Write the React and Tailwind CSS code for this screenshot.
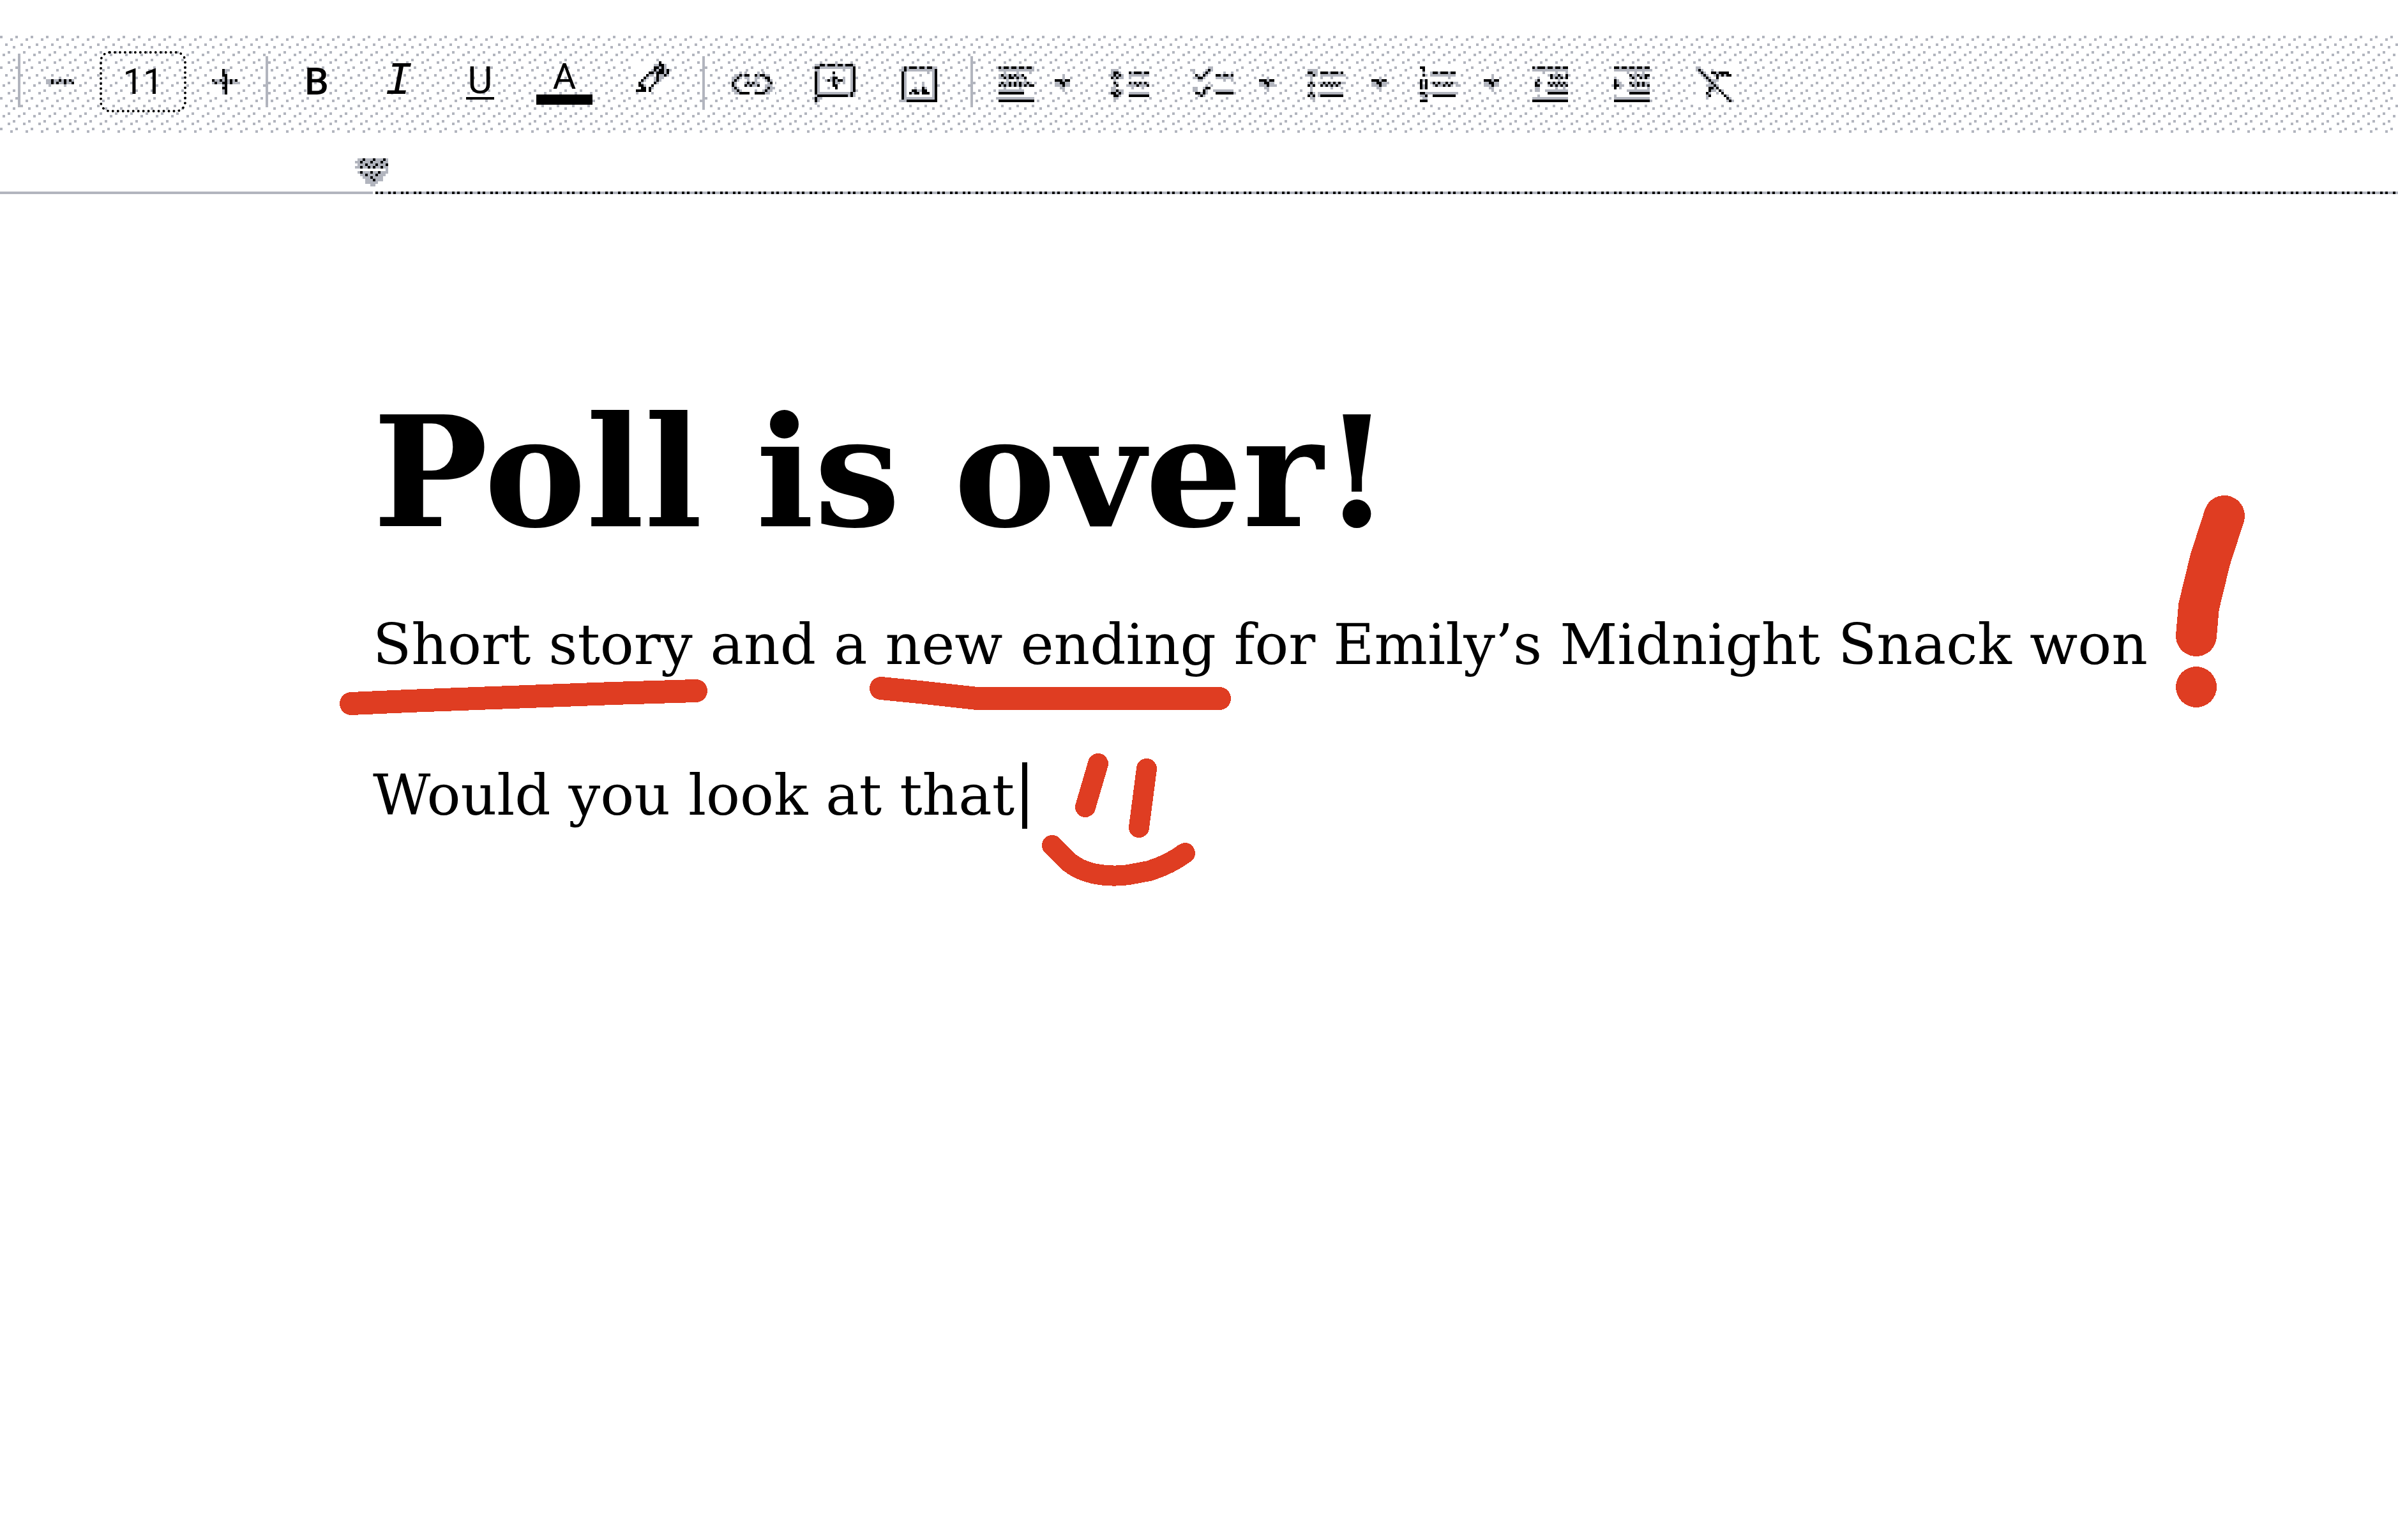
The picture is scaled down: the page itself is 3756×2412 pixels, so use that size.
import React, { useState } from "react";

// --- ICONS ---
// One character is one 4px cell: # is ink, o is shade, . is paper.
// "top" is the number of empty rows above the drawing in the 16 row box.
const CELL = 4;
const ROWS = 16;

const icons = {
  minus: { top: 7, rows: ["oo#oo#o#o#o", "oo#o#oo#oo#"] },
  plus: {
    top: 3,
    rows: [
      "....#oo...",
      "....#o....",
      "....##....",
      "....o#....",
      "#oo#o#o#o#",
      "o#oo##o#oo",
      "....o#....",
      "....##....",
      "....o#....",
      "....o#....",
    ],
  },
  pen: {
    top: 0,
    rows: [
      ".........#....",
      ".......oo##o..",
      ".......##o#o..",
      "......o#o##o#o",
      ".....##o###o#.",
      "....#oo.#oo#o.",
      "...#o..o#oo...",
      "..#o...o#o....",
      ".#o....#o.....",
      ".##o..#.......",
      "..##.#o.......",
      "####.#........",
    ],
  },
  link: {
    top: 4,
    rows: [
      "...o.o....o.o....",
      ".oo#o##..#o##oo..",
      "oo#o.oo..oo.o##..",
      "o#o...o..o...o#o.",
      "#o...o#o#oo...o#.",
      "#o...#o#oo#..ooo.",
      "o#o..........o#oo",
      "oo#o.....o..o#oo.",
      ".oo####..####oo..",
    ],
  },
  comment: {
    top: 1,
    rows: [
      "oo##o###o##o###o",
      "##ooooooooooooo#",
      "oo.........o..o#",
      "#o.....#......o#",
      "#o.....o......o#",
      "#o.o..o##..o..o#",
      "#o..o#o#o##o..o#",
      "#o.....#oo.o..o#",
      "#o.....##.....o#",
      "#o...o..#.....o#",
      "#o............o#",
      "#ooooooooooooo#o",
      "o############o#o",
      "#oo.............",
      "#o..............",
      "o...............",
    ],
  },
  image: {
    top: 2,
    rows: [
      "o#o###o##o##oo",
      "o#ooooooooooo#",
      "#o........o.o#",
      "#o.....o....o#",
      "#o..o.......o#",
      "#o..........o#",
      "#o...o..o...o#",
      "#o......o...o#",
      "#o...o..#o..o#",
      "#o..##oo##..o#",
      "#o.#o##.###.o#",
      "#o..........o#",
      "#oooooooooooo#",
      "oo############",
    ],
  },
  align: {
    top: 2,
    rows: [
      "#o##o##o##o##o",
      "oooooooooooooo",
      "..o....o....o.",
      "o#oo#o#oo#....",
      "oo#o##o#oo#...",
      "...o...o..o...",
      "o#oo#o#o#oo#o.",
      "#o#o#o#o#o#o##",
      "..o.....o.....",
      "oooooooooo....",
      "##########....",
      "..............",
      "oooooooooooooo",
      "##############",
    ],
  },
  arrow: { top: 6, rows: ["...o..", "###o##", "oo##oo", "ooo#oo", "..oo..", "...o.."] },
  spacing: {
    top: 3,
    rows: [
      ".ooo............",
      ".o##o...#o###o##",
      "oo#o#o..oooooooo",
      ".#o#oo..o....o..",
      "..o.............",
      "..#o....#o#o#o#o",
      "..o#...oooo#ooo#",
      ".oo......o...o..",
      ".oo#oo..........",
      "o##o#o..oooooooo",
      "..##o...########",
      "..oo............",
    ],
  },
  checklist: {
    top: 2,
    rows: [
      "......oo........",
      "o....o#o........",
      "o...o#o.....o..o",
      ".#o.#o...##o##o#",
      "oo##o....ooooooo",
      "..oo........o..o",
      "......o.........",
      ".....o.o........",
      "oo..o##.........",
      "oo..#o..oooooooo",
      ".##o#o...#######",
      "..o#o...........",
    ],
  },
  bullets: {
    top: 3,
    rows: [
      ".oooo...........",
      ".##oo.###o###o#.",
      "ooo#o.oooooooooo",
      "..o...o...o.....",
      "..o.............",
      ".o#o.oo#o#o#o#oo",
      ".#o#..#o#o#o#o..",
      "..o.......o...o.",
      "..o.............",
      ".o#o.oooooooooo.",
      ".#o#.o#########.",
      "..oo............",
    ],
  },
  numbers: {
    top: 2,
    rows: [
      "##.............",
      ".#.............",
      ".o..o##o###o##.",
      ".#o.oooooooooo.",
      "...........o...",
      "#o#............",
      "#.#.o#o#oo#o#oo",
      "#o#..o#oo#o#o.o",
      "#o#............",
      "...............",
      "##ooooooooooooo",
      "oo#..#########.",
      ".oo............",
      "###............",
    ],
  },
  outdent: {
    top: 2,
    rows: [
      "#o###o##o##o##",
      "oooooooooooooo",
      "....o....o...o",
      "......o#oo#o.#",
      "..o....#o#o#o#",
      ".o#.......o...",
      ".#oo..#o#o#o#o",
      ".##...o#o#o#o#",
      ".oo......o..o.",
      ".oo..ooooooooo",
      "......########",
      "..o...........",
      "oooooooooooooo",
      "##############",
    ],
  },
  indent: {
    top: 2,
    rows: [
      "##o##o##o##o##",
      "oooooooooooooo",
      ".....o..o..o..",
      "......#oo#oo##",
      "o.....o#o.#o#o",
      "#o......o.....",
      "#oo...#oo#o#oo",
      "##oo..o#o#o#o#",
      "#.o.....o....o",
      ".....ooooooooo",
      "......########",
      "o.............",
      "oooooooooooooo",
      "##############",
    ],
  },
  clear: {
    top: 2,
    rows: [
      "oo.............",
      "o#o...o........",
      ".o#o..##o####..",
      "..o#o..o#o#o##.",
      "...o#o..#......",
      "....o#ooo......",
      ".....o#o.......",
      "....ooo#o......",
      ".....##o#......",
      ".....#oo.#o....",
      "....#o..o.#....",
      "....o#.....#o..",
      "....o.......#o.",
      "............o#o",
    ],
  },
  marker: {
    top: 0,
    rows: [
      ".oo#ooo#ooo#o",
      "oo#ooo#ooo#oo",
      ".ooo#ooo#ooo#",
      "oo#oo#o#oo#oo",
      "............o",
      ".o#ooo#oo#ooo",
      "..oo#ooo#ooo.",
      "...ooo#oooo..",
      "....ooo#ooo..",
      "....ooooo....",
      "......oo.....",
    ],
  },
};

const fills = { "#": "#000000", o: "#b2b5be", ".": "#ffffff" };

const PixelIcon = ({ name, height = ROWS }) => {
  const { top, rows } = icons[name];
  const width = rows[0].length;

  return (
    <svg
      aria-hidden="true"
      width={width * CELL}
      height={height * CELL}
      viewBox={`0 0 ${width} ${height}`}
      shapeRendering="crispEdges"
      className="shrink-0 overflow-visible"
    >
      {rows.map((row, y) =>
        row.split("").map((cell, x) => (
          <rect key={`${x}-${y}`} x={x} y={y + top} width="1" height="1" fill={fills[cell]} />
        ))
      )}
    </svg>
  );
};

// --- TOOLBAR ---
const Divider = ({ className = "" }) => (
  <div className={`h-20 w-1 shrink-0 bg-[#b2b5be] ${className}`} />
);

const ToolButton = ({ label, width, onClick, children }) => (
  <button
    type="button"
    aria-label={label}
    onClick={onClick}
    className={`flex h-24 shrink-0 items-center justify-center ${width}`}
  >
    {children}
  </button>
);

const DotTexture = () => (
  <svg aria-hidden="true" className="absolute inset-0 h-full w-full" shapeRendering="crispEdges">
    <defs>
      <pattern id="dots" width="24" height="48" patternUnits="userSpaceOnUse">
        <path
          fill="#b2b5be"
          d="M0 0h4v4h-4z M16 4h4v4h-4z M8 12h4v4h-4z M20 16h4v4h-4z M12 24h4v4h-4z M4 28h4v4h-4z M20 36h4v4h-4z M12 40h4v4h-4z"
        />
      </pattern>
    </defs>
    <rect width="100%" height="100%" fill="url(#dots)" />
  </svg>
);

const Toolbar = () => {
  const [size, setSize] = useState(11);

  return (
    <div role="toolbar" className="relative h-38 overflow-hidden">
      <DotTexture />
      <div className="relative flex h-full items-center pb-2 pl-7">
        <Divider />
        <ToolButton label="Decrease font size" width="w-31" onClick={() => setSize(size - 1)}>
          <PixelIcon name="minus" />
        </ToolButton>
        <input
          aria-label="Font size"
          value={size}
          onChange={(e) => setSize(Number(e.target.value) || 0)}
          className="h-24 w-34 shrink-0 rounded-2xl border-4 border-dotted border-black text-center font-['Roboto'] text-[56px] text-black"
        />
        <ToolButton label="Increase font size" width="w-30" onClick={() => setSize(size + 1)}>
          <PixelIcon name="plus" />
        </ToolButton>
        <Divider className="ml-1 mr-3" />

        <ToolButton label="Bold" width="w-32">
          <span className="font-['Roboto'] text-[60px] leading-none font-medium">B</span>
        </ToolButton>
        <ToolButton label="Italic" width="w-32">
          <span className="font-['Liberation_Mono'] text-[72px] leading-none italic">I</span>
        </ToolButton>
        <ToolButton label="Underline" width="w-32">
          <span className="flex w-11 flex-col items-center border-b-4 border-black font-['Roboto'] text-[60px] leading-[52px]">
            U
          </span>
        </ToolButton>
        <ToolButton label="Text color" width="w-34">
          <span className="flex w-22 flex-col items-center border-b-16 border-black font-['Roboto'] text-[56px] leading-[56px]">
            A
          </span>
        </ToolButton>
        <ToolButton label="Highlight color" width="w-36">
          <PixelIcon name="pen" />
        </ToolButton>
        <Divider className="ml-1 mr-3" />

        <ToolButton label="Insert link" width="w-32">
          <PixelIcon name="link" />
        </ToolButton>
        <ToolButton label="Add comment" width="w-32">
          <PixelIcon name="comment" />
        </ToolButton>
        <ToolButton label="Insert image" width="w-34">
          <PixelIcon name="image" />
        </ToolButton>
        <Divider className="mx-3" />

        <ToolButton label="Align" width="w-28">
          <PixelIcon name="align" />
        </ToolButton>
        <ToolButton label="Align options" width="w-8">
          <PixelIcon name="arrow" />
        </ToolButton>
        <ToolButton label="Line spacing" width="w-44">
          <PixelIcon name="spacing" />
        </ToolButton>
        <ToolButton label="Checklist" width="w-22">
          <PixelIcon name="checklist" />
        </ToolButton>
        <ToolButton label="Checklist options" width="w-20">
          <PixelIcon name="arrow" />
        </ToolButton>
        <ToolButton label="Bulleted list" width="w-26">
          <PixelIcon name="bullets" />
        </ToolButton>
        <ToolButton label="Bulleted list options" width="w-16">
          <PixelIcon name="arrow" />
        </ToolButton>
        <ToolButton label="Numbered list" width="w-31">
          <PixelIcon name="numbers" />
        </ToolButton>
        <ToolButton label="Numbered list options" width="w-10">
          <PixelIcon name="arrow" />
        </ToolButton>
        <ToolButton label="Decrease indent" width="w-36">
          <PixelIcon name="outdent" />
        </ToolButton>
        <ToolButton label="Increase indent" width="w-28">
          <PixelIcon name="indent" />
        </ToolButton>
        <ToolButton label="Clear formatting" width="w-37">
          <PixelIcon name="clear" />
        </ToolButton>
      </div>
    </div>
  );
};

const Ruler = () => (
  <div className="pt-10">
    <div className="pb-2 pl-139">
      <PixelIcon name="marker" height={11} />
    </div>
    <div className="flex h-1">
      <div className="w-146 bg-[#b2b5be]" />
      <div className="ml-1 flex-1 bg-[repeating-linear-gradient(90deg,#000_0_4px,#b2b5be_4px_8px,#000_8px_12px,#b2b5be_12px_20px)]" />
    </div>
  </div>
);

// Red pen strokes drawn over the document
const PenMarks = () => (
  <svg
    aria-hidden="true"
    className="pointer-events-none absolute inset-0 h-full w-full"
    fill="none"
    stroke="#df3d22"
    strokeLinecap="round"
    strokeLinejoin="round"
    shapeRendering="crispEdges"
  >
    <path strokeWidth="36" d="M550 1102L640 1098L800 1092L960 1086L1090 1082" />
    <path strokeWidth="36" d="M1380 1078L1440 1084L1530 1094H1910" />
    <path strokeWidth="64" d="M3484 808L3462 876L3444 950L3440 996" />
    <path strokeWidth="64" d="M3440 1076h.1" />
    <path strokeWidth="32" d="M1720 1196L1700 1264" />
    <path strokeWidth="32" d="M1796 1204L1784 1296" />
    <path
      strokeWidth="32"
      d="M1648 1324L1674 1350Q1690 1363 1712 1368Q1740 1374 1768 1370L1800 1364Q1832 1354 1856 1336"
    />
  </svg>
);

const App = () => {
  return (
    <div className="relative min-h-screen overflow-hidden bg-white pt-14 text-black">
      <Toolbar />
      <Ruler />

      <main className="pt-74 pl-146 font-['DejaVu_Serif',serif]">
        <h1 className="text-[240px] leading-[280px] font-bold">Poll is over!</h1>
        <p className="mt-[78px] text-[88px] leading-[104px]">
          Short story and a new ending for Emily’s Midnight Snack won
        </p>
        <p className="mt-33 flex items-center text-[88px] leading-[104px]">
          Would you look at that
          <span className="ml-3 h-26 w-2 bg-black" />
        </p>
      </main>

      <PenMarks />
    </div>
  );
};

export default App;
